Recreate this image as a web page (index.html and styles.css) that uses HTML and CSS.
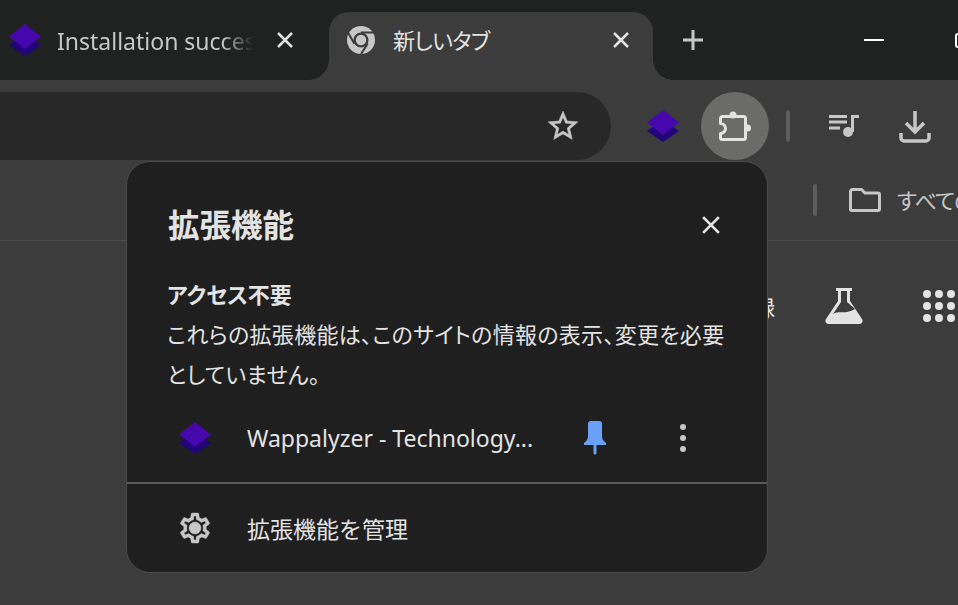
FILE: index.html
```html
<!DOCTYPE html>
<html lang="ja">
<head>
<meta charset="utf-8">
<title>新しいタブ</title>
<link rel="stylesheet" href="styles.css">
</head>
<body>
<div class="window">
  <header class="tabstrip">
    <div class="tab tab-inactive">
      <svg class="logo" viewBox="0 0 32 32"><path class="logo-back" d="M16 10 32 21 16 32 0 21z"/><path class="logo-front" d="M16 0 32 12.500 16 25 0 12.500z"/></svg>
      <span class="tab-title tab-title-fade">Installation success</span>
      <svg class="x-icon" viewBox="0 0 16 16"><path d="M1 1 15 15M15 1 1 15"/></svg>
    </div>
    <div class="tab tab-active">
      <svg class="chrome-icon" viewBox="0 0 28 28"><circle class="chrome-disc" cx="14" cy="14" r="14"/><circle class="chrome-gap" cx="14" cy="14" r="7.600"/><circle class="chrome-disc" cx="14" cy="14" r="5.200"/><path class="chrome-cut" d="M14 6.400H27M7.400 17.800 1 6.500M20.600 17.800 14 28"/></svg>
      <span class="tab-title tab-title-ja">新しいタブ</span>
      <svg class="x-icon" viewBox="0 0 16 16"><path d="M1 1 15 15M15 1 1 15"/></svg>
    </div>
    <svg class="plus-icon" viewBox="0 0 20 20"><path d="M10 0V20M0 10H20"/></svg>
    <div class="caption">
      <span class="minimize"></span>
      <span class="restore"></span>
    </div>
  </header>

  <div class="toolbar">
    <div class="omnibox">
      <svg class="star-icon" viewBox="0 0 24 24"><path d="M22 9.240l-7.190-.62L12 2 9.190 8.630 2 9.240l5.460 4.730L5.820 21 12 17.270 18.180 21l-1.630-7.030L22 9.240zM12 15.400l-3.760 2.270 1-4.280-3.320-2.880 4.380-.38L12 6.100l1.710 4.040 4.380.38-3.320 2.880 1 4.280L12 15.400z"/></svg>
    </div>
    <div class="tool-btn tool-logo">
      <svg class="logo" viewBox="0 0 32 32"><path class="logo-back" d="M16 10 32 21 16 32 0 21z"/><path class="logo-front" d="M16 0 32 12.500 16 25 0 12.500z"/></svg>
    </div>
    <div class="tool-btn tool-active">
      <svg class="puzzle-icon" viewBox="0 0 32 32"><path d="M3.500 6.500H24.500a2 2 0 0 1 2 2V27.500a2 2 0 0 1-2 2H3.500a2 2 0 0 1-2-2V23.500a5 5 0 0 0 0-10V8.500a2 2 0 0 1 2-2z"/><circle class="puzzle-knob" cx="14" cy="5" r="3.500"/><circle class="puzzle-knob" cx="28.500" cy="18" r="3.500"/></svg>
    </div>
    <span class="divider-v divider-tool"></span>
    <div class="tool-btn">
      <svg class="queue-icon" viewBox="0 0 32 24"><path class="queue-line" d="M0 2.500H18M0 8H18M0 14H11"/><path class="queue-line" d="M23.500 18V2.500H30"/><circle cx="19" cy="18" r="5"/></svg>
    </div>
    <div class="tool-btn tool-download">
      <svg class="download-icon" viewBox="0 0 32 32"><path d="M16 0V21M7 12 16 21 25 12M2 22V27a3 3 0 0 0 3 3H27a3 3 0 0 0 3-3V22"/></svg>
    </div>
  </div>

  <nav class="bookmarks">
    <span class="divider-v"></span>
    <svg class="folder-icon" viewBox="0 0 32 24"><path d="M3.500 1.500H12.500L16 5H29a1.500 1.500 0 0 1 1.500 1.500V21a1.500 1.500 0 0 1-1.500 1.500H3a1.500 1.500 0 0 1-1.500-1.500V3.500a2 2 0 0 1 2-2z"/></svg>
    <span class="bookmark-label">すべての</span>
  </nav>

  <main class="ntp">
    <span class="ntp-label">記録</span>
    <svg class="flask-icon" viewBox="0 0 38 36"><path d="M11 0H27V3H25V13L37 31a3.200 3.200 0 0 1-3 5H4a3.200 3.200 0 0 1-3-5L13 13V3H11zM16 3V14L8 26C14 22 20 27 30 21L22 14V3z" fill-rule="evenodd"/></svg>
    <div class="apps-grid">
      <i></i><i></i><i></i><i></i><i></i><i></i><i></i><i></i><i></i>
    </div>
  </main>

  <section class="popup">
    <div class="popup-head">
      <h1 class="popup-title">拡張機能</h1>
      <svg class="x-icon popup-close" viewBox="0 0 16 16"><path d="M1 1 15 15M15 1 1 15"/></svg>
    </div>
    <div class="popup-body">
      <h2 class="section-title">アクセス不要</h2>
      <p class="section-text">これらの拡張機能は、このサイトの情報の表示、変更を必要としていません。</p>
    </div>
    <div class="ext-row">
      <span class="row-icon">
        <svg class="logo" viewBox="0 0 32 32"><path class="logo-back" d="M16 10 32 21 16 32 0 21z"/><path class="logo-front" d="M16 0 32 12.500 16 25 0 12.500z"/></svg>
      </span>
      <span class="ext-name">Wappalyzer - Technology...</span>
      <svg class="pin-icon" viewBox="0 0 24 34"><path d="M5 3a3 3 0 0 1 3-3H16a3 3 0 0 1 3 3V15C19 19 21 20 23 22V24H13.500V32a1.500 1.500 0 0 1-3 0V24H1V22C3 20 5 19 5 15z"/></svg>
      <span class="kebab"><i></i><i></i><i></i></span>
    </div>
    <div class="manage-row">
      <span class="row-icon">
        <svg class="gear-icon" viewBox="0 0 24 24"><path d="M19.430 12.980c.04-.32.07-.64.07-.98 0-.34-.03-.66-.07-.98l2.110-1.650c.19-.15.24-.42.12-.64l-2-3.460c-.09-.16-.26-.25-.44-.25-.06 0-.12.01-.17.03l-2.490 1c-.52-.4-1.080-.73-1.690-.98l-.38-2.650C14.460 2.180 14.250 2 14 2h-4c-.25 0-.46.18-.49.42l-.38 2.650c-.61.25-1.170.59-1.690.98l-2.490-1c-.06-.02-.12-.03-.18-.03-.17 0-.34.09-.43.25l-2 3.460c-.13.22-.07.49.12.64l2.110 1.650c-.04.32-.07.65-.07.98 0 .33.03.66.07.98l-2.110 1.650c-.19.15-.24.42-.12.64l2 3.460c.09.16.26.25.44.25.06 0 .12-.01.17-.03l2.490-1c.52.4 1.080.73 1.690.98l.38 2.650c.03.24.24.42.49.42h4c.25 0 .46-.18.49-.42l.38-2.650c.61-.25 1.170-.59 1.690-.98l2.490 1c.06.02.12.03.18.03.17 0 .34-.09.43-.25l2-3.460c.12-.22.07-.49-.12-.64l-2.110-1.650zm-1.980-1.710c.04.31.05.52.05.73 0 .21-.02.43-.05.73l-.14 1.130.89.7 1.080.84-.7 1.210-1.270-.51-1.040-.42-.9.68c-.43.32-.84.56-1.250.73l-1.060.43-.16 1.130-.2 1.350h-1.400l-.19-1.350-.16-1.130-1.060-.43c-.43-.18-.83-.41-1.230-.71l-.91-.7-1.060.43-1.270.51-.7-1.210 1.080-.84.89-.7-.14-1.130c-.03-.31-.05-.54-.05-.74s.02-.43.05-.73l.14-1.130-.89-.7-1.080-.84.7-1.210 1.270.51 1.040.42.9-.68c.43-.32.84-.56 1.250-.73l1.060-.43.16-1.130.2-1.350h1.390l.19 1.350.16 1.130 1.060.43c.43.18.83.41 1.230.71l.91.7 1.060-.43 1.270-.51.7 1.210-1.070.85-.89.7.14 1.130z"/><circle cx="12" cy="12" r="4"/></svg>
      </span>
      <span class="manage-label">拡張機能を管理</span>
    </div>
  </section>
</div>
</body>
</html>
```

FILE: styles.css
```css
* { box-sizing: border-box; }
html, body { margin: 0; height: 100%; background: #3c3c3c; overflow: hidden; }
body { font-family: "Noto Sans", "Noto Sans CJK JP", sans-serif; color: #e3e3e3; }
h1, h2, p { margin: 0; font-weight: inherit; font-size: inherit; }

.window { position: relative; width: 958px; height: 605px; overflow: hidden; }

/* tab strip */
.tabstrip { display: flex; align-items: flex-start; height: 80px; background: #202221; }
.tab { display: flex; align-items: center; height: 68px; margin-top: 12px; flex: none; }
.tab-inactive { width: 329px; padding: 0 36px 12px 9px; }
.tab-active { position: relative; width: 324px; padding: 0 24px 12px 18px; background: #3c3c3c; border-radius: 20px 20px 0 0; }
.tab-active::before, .tab-active::after { content: ""; position: absolute; bottom: 0; width: 20px; height: 20px; }
.tab-active::before { left: -20px; background: radial-gradient(circle at 0 0, transparent 19.500px, #3c3c3c 20px); }
.tab-active::after { right: -20px; background: radial-gradient(circle at 100% 0, transparent 19.500px, #3c3c3c 20px); }
.tab-title { flex: 1; min-width: 0; padding-top: 2px; white-space: nowrap; overflow: hidden; font-size: 23px; line-height: 32px; }
.tab-title-fade { margin: 0 24px 0 16px; color: #c7c7c7; -webkit-mask-image: linear-gradient(90deg, #000 84%, transparent 100%); mask-image: linear-gradient(90deg, #000 84%, transparent 100%); }
.tab-title-ja { margin-left: 18px; padding-top: 0; font-size: 22px; letter-spacing: -.7px; color: #e3e3e3; font-feature-settings: "palt"; }
.logo { width: 32px; height: 32px; flex: none; }
.logo-back { fill: #21057a; }
.logo-front { fill: #4608ad; }
.x-icon { width: 16px; height: 16px; flex: none; fill: none; stroke: #e3e3e3; stroke-width: 2.500; }
.chrome-icon { width: 28px; height: 28px; flex: none; }
.chrome-disc { fill: #c7c7c7; }
.chrome-gap { fill: #3c3c3c; }
.chrome-cut { fill: none; stroke: #3c3c3c; stroke-width: 2; }
.plus-icon { width: 20px; height: 20px; margin: 30px 0 0 30px; flex: none; fill: none; stroke: #c7c7c7; stroke-width: 3; }
.caption { display: flex; align-items: flex-start; margin-left: 161px; flex: none; }
.minimize { width: 20px; height: 2px; margin-top: 39px; background: #fff; }
.restore { width: 16px; height: 15px; margin: 33px 0 0 71px; border: 2px solid #fff; border-radius: 3px; flex: none; }

/* toolbar */
.toolbar { display: flex; align-items: center; height: 80px; padding-top: 12px; background: #3c3c3c; }
.omnibox { display: flex; align-items: center; justify-content: flex-end; flex: none; width: 611px; height: 68px; padding-right: 30px; background: #282828; border-radius: 0 34px 34px 0; }
.star-icon { width: 36px; height: 36px; fill: #c7c7c7; stroke: #c7c7c7; stroke-width: .3; }
.tool-btn { display: flex; align-items: center; justify-content: center; flex: none; width: 68px; height: 68px; border-radius: 50%; }
.tool-logo { margin-left: 18px; margin-right: 4px; }
.tool-active { background: #6b6b69; }
.tool-download { margin-left: 2px; padding-top: 2px; }
.puzzle-icon { width: 32px; height: 32px; fill: none; stroke: #e3e3e3; stroke-width: 3; stroke-linejoin: round; }
.puzzle-knob { fill: #e3e3e3; stroke: none; }
.divider-v { display: block; flex: none; width: 4px; height: 32px; border-radius: 2px; background: #5d5d5d; }
.divider-tool { margin: 0 21px 0 17px; }
.queue-icon { width: 32px; height: 24px; fill: #c7c7c7; }
.queue-line { fill: none; stroke: #c7c7c7; stroke-width: 3; }
.download-icon { width: 32px; height: 32px; fill: none; stroke: #c7c7c7; stroke-width: 3.500; }

/* bookmarks */
.bookmarks { display: flex; align-items: center; height: 81px; padding-left: 813px; background: #3c3c3c; border-bottom: 1px solid #4a4a4a; white-space: nowrap; }
.folder-icon { width: 32px; height: 24px; flex: none; margin-left: 32px; fill: none; stroke: #c7c7c7; stroke-width: 3; }
.bookmark-label { margin: 0 0 2px 16px; flex: none; font-size: 22px; letter-spacing: -1px; color: #c7c7c7; font-feature-settings: "palt"; }

/* new tab page */
.ntp { display: flex; align-items: center; height: 36px; margin-top: 47px; padding-left: 700px; }
.ntp-label { flex: none; width: 75px; text-align: right; font-size: 22px; color: #e3e3e3; }
.flask-icon { width: 38px; height: 36px; flex: none; margin-left: 50px; fill: #e3e3e3; }
.apps-grid { display: grid; grid-template-columns: repeat(3, 8px); gap: 4px; flex: none; margin-left: 60px; }
.apps-grid i { display: block; width: 8px; height: 8px; border-radius: 50%; background: #e3e3e3; }

/* extensions popup */
.popup { position: absolute; left: 126px; top: 161px; width: 642px; height: 412px; background: #1f1f1f; border: 1px solid #4a4a4a; border-radius: 24px; }
.popup-head { display: flex; align-items: center; justify-content: space-between; height: 48px; margin-top: 39px; padding: 0 47px 0 41px; }
.popup-title { font-size: 31.500px; font-weight: 700; line-height: 48px; color: #e3e3e3; }
.popup-close { width: 18px; height: 18px; }
.popup-body { margin-top: 25px; padding: 0 40px; font-size: 22px; line-height: 40px; color: #e3e3e3; font-feature-settings: "palt"; }
.section-title { font-weight: 700; }
.section-text { letter-spacing: .3px; }
.ext-row { display: flex; align-items: center; height: 64px; margin-top: 12px; }
.row-icon { display: flex; justify-content: center; flex: none; width: 64px; margin-left: 36px; }
.ext-name { flex: none; width: 285px; margin-left: 20px; font-size: 23px; white-space: nowrap; color: #e3e3e3; }
.pin-icon { width: 24px; height: 34px; flex: none; margin-left: 51px; fill: #6aa0f8; }
.kebab { display: flex; flex-direction: column; gap: 5px; margin-left: 73px; flex: none; }
.kebab i { display: block; width: 6px; height: 6px; border-radius: 50%; background: #c7c7c7; }
.manage-row { display: flex; align-items: center; height: 89px; margin-top: 12px; border-top: 2px solid #5a5a5a; }
.gear-icon { width: 36px; height: 36px; fill: #c7c7c7; stroke: #c7c7c7; stroke-width: .3; }
.manage-label { margin-left: 20px; font-size: 23px; color: #e3e3e3; }
```
